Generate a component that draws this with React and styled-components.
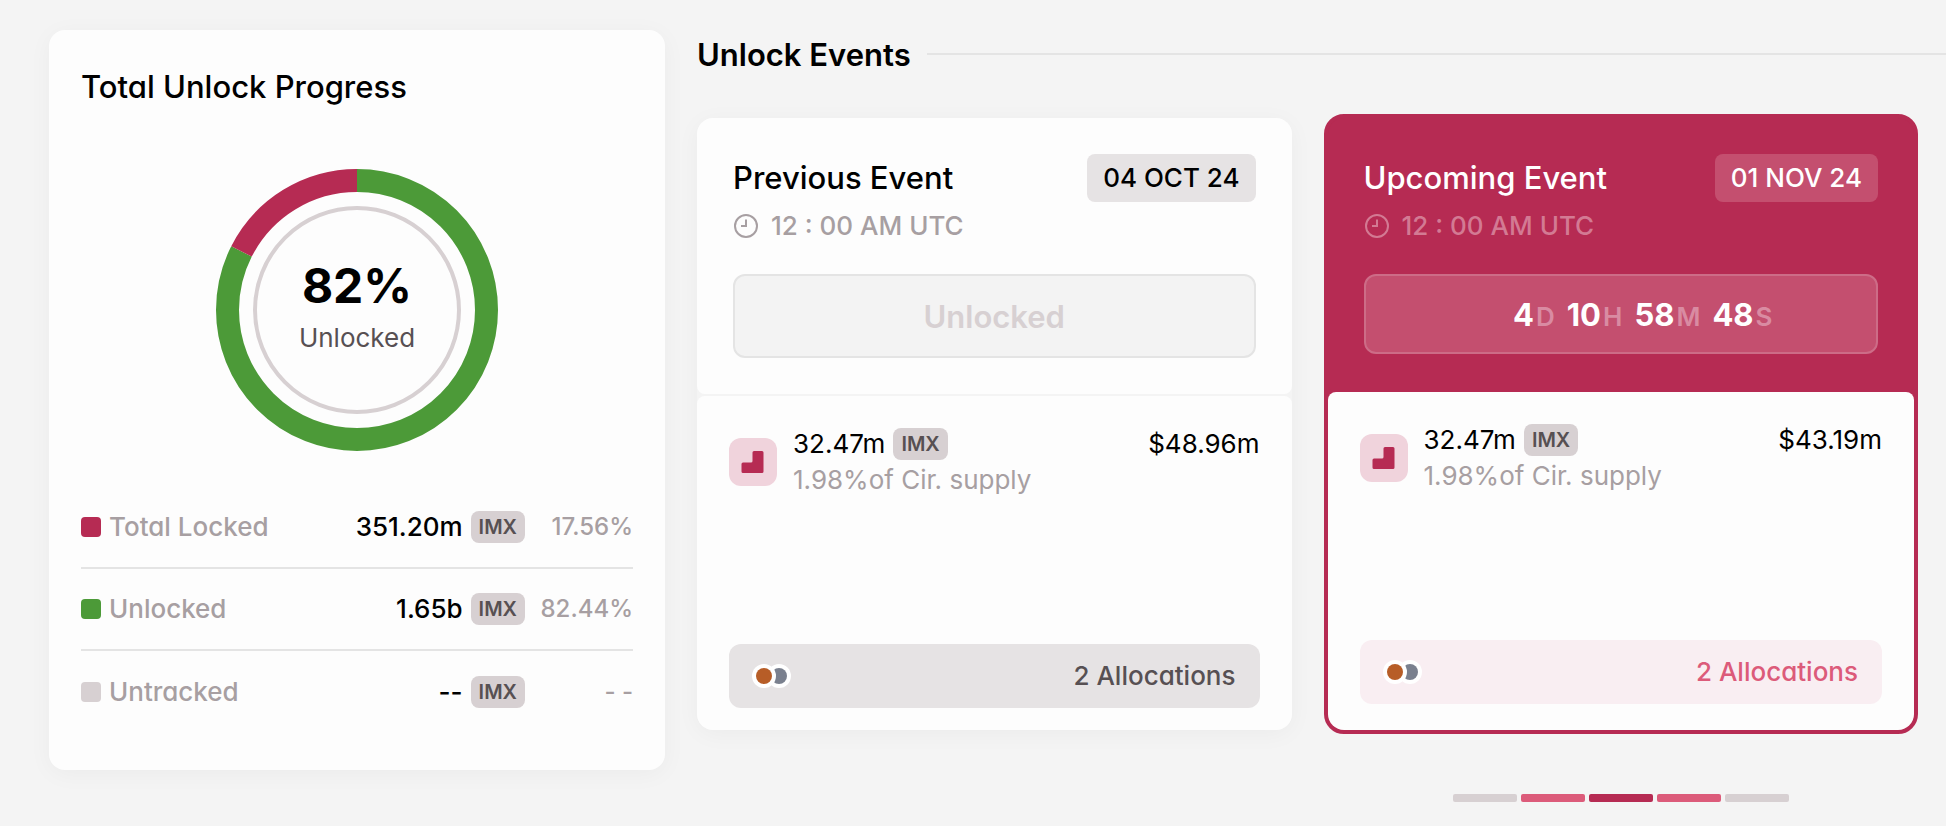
import React from "react";
import styled, { createGlobalStyle } from "styled-components";

const CIRCLE = 2 * Math.PI * 129.5;

const supply = [
  { label: "Total Locked", color: "#b62b53", amount: "351.20m", share: "17.56%" },
  { label: "Unlocked", color: "#4c9a38", amount: "1.65b", share: "82.44%" },
  { label: "Untracked", color: "#d7d0d2", amount: "--", share: "- -" },
];

const countdown = [
  { value: "4", unit: "D" },
  { value: "10", unit: "H" },
  { value: "58", unit: "M" },
  { value: "48", unit: "S" },
];

const pages = ["#d7d0d2", "#dc5b7a", "#b62b53", "#dc5b7a", "#d7d0d2"];

const Donut = ({ percent }) => (
  <svg width="282" height="282" viewBox="0 0 282 282" aria-hidden="true">
    <g fill="none" transform="rotate(-90 141 141)">
      <circle
        cx="141"
        cy="141"
        r="129.5"
        stroke="#4c9a38"
        strokeWidth="23"
        strokeDasharray={`${(CIRCLE * percent) / 100} ${CIRCLE}`}
      />
      <circle
        cx="141"
        cy="141"
        r="129.5"
        stroke="#b62b53"
        strokeWidth="23"
        strokeDasharray={`${(CIRCLE * (100 - percent)) / 100} ${CIRCLE}`}
        strokeDashoffset={(-CIRCLE * percent) / 100}
      />
      <circle cx="141" cy="141" r="102" stroke="#d7d0d2" strokeWidth="4" />
    </g>
  </svg>
);

const ClockIcon = () => (
  <svg width="26" height="24" viewBox="0 0 26 24" fill="none" aria-hidden="true">
    <circle cx="13" cy="12" r="11" stroke="currentColor" strokeWidth="2" />
    <path d="M13 5.5V12H8" stroke="currentColor" strokeWidth="2" />
  </svg>
);

const CliffIcon = () => (
  <svg width="24" height="24" viewBox="0 0 24 24" aria-hidden="true">
    <path
      fill="#b62b53"
      d="M13 1h8a1.500 1.500 0 0 1 1.500 1.500v19a1.500 1.500 0 0 1-1.500 1.500H2a1.500 1.500 0 0 1-1.500-1.500v-7.500a1.500 1.500 0 0 1 1.500-1.500h8a1.500 1.500 0 0 0 1.500-1.500v-8.500a1.500 1.500 0 0 1 1.500-1.500Z"
    />
  </svg>
);

const AllocationDots = () => (
  <svg width="40" height="24" viewBox="0 0 40 24" aria-hidden="true">
    <circle cx="27" cy="12" r="12" fill="#fff" />
    <circle cx="27" cy="12" r="8" fill="#7a808e" />
    <circle cx="12" cy="12" r="12" fill="#fff" />
    <circle cx="12" cy="12" r="8" fill="#b75d27" />
  </svg>
);

const EventCard = ({ title, date, upcoming, amount, value, children }) => (
  <Card $upcoming={upcoming}>
    <CardTop $upcoming={upcoming}>
      <TitleRow>
        <CardTitle>{title}</CardTitle>
        <DateTag $upcoming={upcoming}>{date}</DateTag>
      </TitleRow>
      <Time $upcoming={upcoming}>
        <ClockIcon />
        12 : 00 AM UTC
      </Time>
      {children}
    </CardTop>
    <CardBottom $upcoming={upcoming}>
      <Unlock>
        <IconBox>
          <CliffIcon />
        </IconBox>
        <UnlockInfo>
          <Amount>
            {amount}
            <Ticker>IMX</Ticker>
          </Amount>
          <Supply>1.98%of Cir. supply</Supply>
        </UnlockInfo>
        <span>{value}</span>
      </Unlock>
      <Allocations type="button" $upcoming={upcoming}>
        <AllocationDots />
        2 Allocations
      </Allocations>
    </CardBottom>
  </Card>
);

const App = () => {
  return (
    <>
      <GlobalStyle />
      <Page>
        <Progress>
          <CardTitle>Total Unlock Progress</CardTitle>
          <Chart>
            <Donut percent={82.44} />
            <ChartLabel>
              <Percent>82%</Percent>
              <ChartText>Unlocked</ChartText>
            </ChartLabel>
          </Chart>
          <Table>
            <tbody>
              {supply.map((row) => (
                <tr key={row.label}>
                  <LabelCell scope="row">
                    <Label>
                      <Swatch $color={row.color} />
                      {row.label}
                    </Label>
                  </LabelCell>
                  <td>
                    <Amount $end>
                      {row.amount}
                      <Ticker>IMX</Ticker>
                    </Amount>
                  </td>
                  <ShareCell>{row.share}</ShareCell>
                </tr>
              ))}
            </tbody>
          </Table>
        </Progress>
        <section>
          <Heading>
            <HeadingText>Unlock Events</HeadingText>
            <Line />
          </Heading>
          <Cards>
            <EventCard
              title="Previous Event"
              date="04 OCT 24"
              amount="32.47m"
              value="$48.96m"
            >
              <Status>Unlocked</Status>
            </EventCard>
            <EventCard
              upcoming
              title="Upcoming Event"
              date="01 NOV 24"
              amount="32.47m"
              value="$43.19m"
            >
              <Countdown>
                {countdown.map((item) => (
                  <CountItem key={item.unit}>
                    <CountValue>{item.value}</CountValue>
                    <CountUnit>{item.unit}</CountUnit>
                  </CountItem>
                ))}
              </Countdown>
            </EventCard>
            <Pagination aria-label="Events">
              {pages.map((color, i) => (
                <PageButton
                  key={i}
                  type="button"
                  aria-label={`Event ${i + 1}`}
                  $color={color}
                />
              ))}
            </Pagination>
          </Cards>
        </section>
      </Page>
    </>
  );
};

const GlobalStyle = createGlobalStyle`
  * {
    box-sizing: border-box;
  }
  body {
    margin: 0;
    background-color: #f4f4f4;
    color: #000;
    font-family: Inter, "Liberation Sans", sans-serif;
    font-feature-settings: "cv11";
    font-size: 26px;
    line-height: 32px;
    font-weight: 500;
  }
  button {
    border: none;
    padding: 0;
    font: inherit;
    font-feature-settings: inherit;
    cursor: pointer;
  }
`;
const Page = styled.main`
  display: grid;
  grid-template-columns: minmax(0, 616fr) minmax(0, 1249fr);
  align-items: start;
  gap: 32px;
  padding: 30px 0 24px 49px;
`;
const Progress = styled.section`
  padding: 36px 32px 38px;
  border-radius: 16px;
  background-color: #fdfdfd;
  box-shadow: 0 4px 24px rgba(0, 0, 0, 0.04);
`;
const CardTitle = styled.h2`
  margin: 0;
  font-size: 31px;
  line-height: 42px;
  font-weight: 500;
  white-space: nowrap;
`;
const Chart = styled.div`
  display: grid;
  place-items: center;
  margin: 61px 0 35px;

  > * {
    grid-area: 1 / 1;
  }
`;
const ChartLabel = styled.div`
  display: flex;
  flex-direction: column;
  align-items: center;
  gap: 4px;
  padding-bottom: 4px;
`;
const Percent = styled.strong`
  font-size: 48px;
  line-height: 56px;
  font-weight: 700;
`;
const ChartText = styled.span`
  line-height: 40px;
  font-weight: 400;
  color: #575053;
`;
const Table = styled.table`
  width: 100%;
  border-collapse: collapse;

  th,
  td {
    height: 82px;
    padding: 0;
  }
  tr + tr > * {
    border-top: 2px solid #e4e4e4;
  }
`;
const LabelCell = styled.th`
  text-align: left;
  font-weight: 500;
  color: #a79fa2;
`;
const Label = styled.div`
  display: flex;
  align-items: center;
  gap: 8px;
`;
const Swatch = styled.span`
  width: 20px;
  height: 20px;
  border-radius: 4px;
  background-color: ${(props) => props.$color};
`;
const ShareCell = styled.td`
  width: 108px;
  text-align: right;
  font-size: 24px;
  color: #a79fa2;
`;
const Amount = styled.div`
  display: flex;
  align-items: center;
  justify-content: ${(props) => (props.$end ? "flex-end" : "flex-start")};
  gap: 8px;
`;
const Ticker = styled.span`
  padding: 0 8px;
  border-radius: 8px;
  background-color: #d7d0d2;
  color: #575053;
  font-size: 20px;
  line-height: 32px;
  font-weight: 600;
`;
const Heading = styled.div`
  display: flex;
  align-items: center;
  gap: 16px;
  height: 48px;
  margin-bottom: 36px;
`;
const HeadingText = styled.h1`
  margin: 0;
  padding-top: 2px;
  font-size: 31px;
  line-height: 40px;
  font-weight: 600;
  white-space: nowrap;
`;
const Line = styled.span`
  flex: 1;
  height: 2px;
  background-color: #e4e4e4;
`;
const Cards = styled.div`
  display: grid;
  grid-template-columns: repeat(2, minmax(0, 1fr));
  align-items: center;
  column-gap: 32px;
  row-gap: 60px;
  padding-right: 28px;
`;
const Card = styled.article`
  display: flex;
  flex-direction: column;
  gap: ${(props) => (props.$upcoming ? "0" : "2px")};
  border: ${(props) => (props.$upcoming ? "4px solid #b62b53" : "none")};
  border-radius: ${(props) => (props.$upcoming ? "20px" : "16px")};
  background-color: ${(props) => (props.$upcoming ? "#b62b53" : "#f4f4f4")};
  box-shadow: ${(props) =>
    props.$upcoming ? "none" : "0 4px 24px rgba(0, 0, 0, 0.04)"};
`;
const CardTop = styled.div`
  padding: ${(props) => (props.$upcoming ? "36px 36px 38px" : "36px")};
  border-radius: 16px 16px 8px 8px;
  background-color: ${(props) => (props.$upcoming ? "#b62b53" : "#fdfdfd")};
  color: ${(props) => (props.$upcoming ? "#fff" : "#000")};
`;
const TitleRow = styled.div`
  display: flex;
  align-items: center;
  justify-content: space-between;
`;
const DateTag = styled.time`
  padding: 8px 16px;
  border-radius: 8px;
  white-space: nowrap;
  background-color: ${(props) => (props.$upcoming ? "#c44f6f" : "#e6e3e4")};
`;
const Time = styled.div`
  display: flex;
  align-items: center;
  gap: 12px;
  height: 48px;
  margin-bottom: 24px;
  color: ${(props) => (props.$upcoming ? "#d37a93" : "#a79fa2")};
`;
const Status = styled.div`
  display: flex;
  align-items: center;
  justify-content: center;
  height: 84px;
  padding-top: 2px;
  border: 2px solid #e4e4e4;
  border-radius: 12px;
  background-color: #f3f3f3;
  color: #d7d0d2;
  font-size: 31px;
  font-weight: 600;
`;
const Countdown = styled.div`
  display: flex;
  align-items: center;
  justify-content: center;
  gap: 12px;
  height: 80px;
  padding-top: 4px;
  border: 2px solid #cd6c87;
  border-radius: 12px;
  background-color: #c44f6f;
`;
const CountItem = styled.span`
  display: flex;
  align-items: baseline;
  gap: 2px;

  &:first-child {
    padding-left: 44px;
  }
`;
const CountValue = styled.span`
  font-size: 31px;
  font-weight: 700;
`;
const CountUnit = styled.span`
  font-weight: 600;
  color: #d98ba2;
`;
const CardBottom = styled.div`
  display: flex;
  flex-direction: column;
  justify-content: space-between;
  height: ${(props) => (props.$upcoming ? "338px" : "334px")};
  padding: ${(props) => (props.$upcoming ? "32px 32px 26px" : "32px 32px 22px")};
  border-radius: 8px 8px 16px 16px;
  background-color: #fdfdfd;
`;
const Unlock = styled.div`
  display: flex;
  align-items: flex-start;
  gap: 16px;
  font-weight: 400;
`;
const IconBox = styled.span`
  display: flex;
  align-items: center;
  justify-content: center;
  width: 48px;
  height: 48px;
  margin-top: 10px;
  border-radius: 12px;
  background-color: #f0d3dc;
`;
const UnlockInfo = styled.div`
  flex: 1;
  white-space: nowrap;
`;
const Supply = styled.div`
  line-height: 40px;
  color: #a79fa2;
`;
const Allocations = styled.button`
  display: flex;
  align-items: center;
  justify-content: space-between;
  height: 64px;
  padding: 0 24px 0 23px;
  border-radius: 12px;
  background-color: ${(props) => (props.$upcoming ? "#f9eef2" : "#e6e3e4")};
  color: ${(props) => (props.$upcoming ? "#dc5b7a" : "#575053")};
`;
const Pagination = styled.nav`
  grid-column: 2;
  display: flex;
  justify-content: center;
  gap: 4px;
`;
const PageButton = styled.button`
  width: 64px;
  height: 8px;
  border-radius: 2px;
  background-color: ${(props) => props.$color};
`;

export default App;
